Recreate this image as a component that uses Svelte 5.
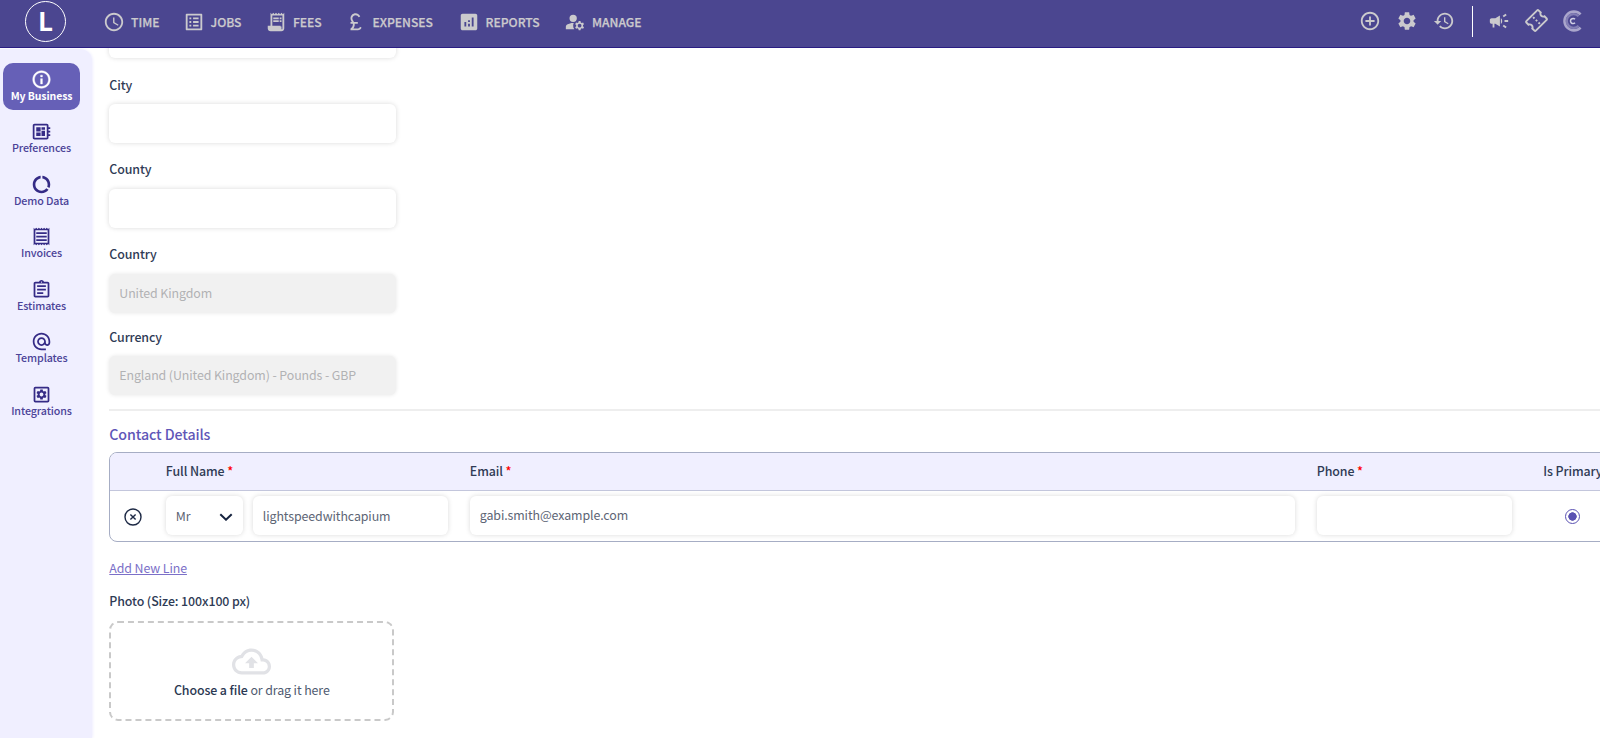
<script lang="ts">
	const gear =
		'M19.14 12.94c.04-.3.06-.61.06-.94 0-.32-.02-.64-.07-.94l2.03-1.58c.18-.14.23-.41.12-.61l-1.92-3.32c-.12-.22-.37-.29-.59-.22l-2.39.96c-.5-.38-1.03-.7-1.62-.94l-.36-2.54c-.04-.24-.24-.41-.48-.41h-3.84c-.24 0-.43.17-.47.41l-.36 2.54c-.59.24-1.13.57-1.62.94l-2.39-.96c-.22-.08-.47 0-.59.22L2.74 8.87c-.12.21-.08.47.12.61l2.03 1.58c-.05.3-.09.63-.09.94s.02.64.07.94l-2.03 1.58c-.18.14-.23.41-.12.61l1.92 3.32c.12.22.37.29.59.22l2.39-.96c.5.38 1.03.7 1.62.94l.36 2.54c.05.24.24.41.48.41h3.84c.24 0 .44-.17.47-.41l.36-2.54c.59-.24 1.13-.56 1.62-.94l2.39.96c.22.08.47 0 .59-.22l1.92-3.32c.12-.22.07-.47-.12-.61l-2.01-1.58zM12 15.6c-1.98 0-3.6-1.62-3.6-3.6s1.62-3.6 3.6-3.6 3.6 1.62 3.6 3.6-1.62 3.6-3.6 3.6z';

	const nav = [
		{ label: 'TIME', icon: 'M11.99 2C6.47 2 2 6.48 2 12s4.47 10 9.99 10C17.52 22 22 17.52 22 12S17.52 2 11.99 2zM12 20c-4.42 0-8-3.58-8-8s3.58-8 8-8 8 3.58 8 8-3.58 8-8 8zM12.5 7H11v6l5.25 3.15.75-1.23-4.5-2.67z' },
		{ label: 'JOBS', icon: 'M19 5v14H5V5h14m1.1-2H3.9c-.5 0-.9.4-.9.9v16.2c0 .4.4.9.9.9h16.2c.4 0 .9-.5.9-.9V3.9c0-.5-.5-.9-.9-.9zM11 7h6v2h-6V7zm0 4h6v2h-6v-2zm0 4h6v2h-6zM7 7h2v2H7zm0 4h2v2H7zm0 4h2v2H7z' },
		{ label: 'FEES', icon: 'M19.5 3.5L18 2l-1.5 1.5L15 2l-1.5 1.5L12 2l-1.5 1.5L9 2 7.5 3.5 6 2v14H3v3c0 1.66 1.34 3 3 3h12c1.66 0 3-1.34 3-3V2l-1.5 1.5zM19 19c0 .55-.45 1-1 1s-1-.45-1-1v-3H8V5h11v14zM9 7h6v2H9zM16 7h2v2h-2zM9 10h6v2H9zM16 10h2v2h-2z' },
		{ label: 'EXPENSES', icon: 'M14 21c1.93 0 3.62-1.17 4-3l-1.75-.88C16 18.21 15.33 19 14 19H9.1c.83-1 1.5-2.34 1.5-4 0-.35-.03-.69-.08-1H14v-2H9.82C9 10.42 8 9.6 8 8c0-1.93 1.57-3.5 3.5-3.5 1.5 0 2.79.95 3.28 2.28L16.63 6c-.8-2.05-2.79-3.5-5.13-3.5C8.46 2.5 6 4.96 6 8c0 1.78.79 2.9 1.49 4H6v2h2.47c.08.31.13.64.13 1 0 2.7-2.6 4-2.6 4v2h8z' },
		{ label: 'REPORTS', icon: 'M19 3H5c-1.1 0-2 .9-2 2v14c0 1.1.9 2 2 2h14c1.1 0 2-.9 2-2V5c0-1.1-.9-2-2-2zM9 17H7v-5h2v5zm4 0h-2v-3h2v3zm0-5h-2v-2h2v2zm4 5h-2V7h2v10z' },
		{ label: 'MANAGE', icon: 'M10 4a4 4 0 1 0 0 8 4 4 0 0 0 0-8zM10.67 13.02C10.45 13.01 10.23 13 10 13c-2.42 0-4.68.67-6.61 1.82C2.51 15.34 2 16.32 2 17.35V20h9.26C10.47 18.87 10 17.49 10 16c0-1.07.25-2.07.67-2.98zM20.75 16c0-.22-.03-.42-.06-.63l1.14-1.01-1-1.73-1.45.49c-.32-.27-.68-.48-1.08-.63L18 11h-2l-.3 1.49c-.4.15-.76.36-1.08.63l-1.45-.49-1 1.73 1.14 1.01c-.03.21-.06.41-.06.63s.03.42.06.63l-1.14 1.01 1 1.73 1.45-.49c.32.27.68.48 1.08.63L16 21h2l.3-1.49c.4-.15.76-.36 1.08-.63l1.45.49 1-1.73-1.14-1.01c.03-.21.06-.41.06-.63zM17 18c-1.1 0-2-.9-2-2s.9-2 2-2 2 .9 2 2-.9 2-2 2z' }
	];

	const side = [
		{ label: 'My Business', icon: 'M11 7h2v2h-2zm0 4h2v6h-2zm1-9C6.48 2 2 6.48 2 12s4.48 10 10 10 10-4.48 10-10S17.52 2 12 2zm0 18c-4.41 0-8-3.59-8-8s3.59-8 8-8 8 3.59 8 8-3.59 8-8 8z' },
		{ label: 'Preferences', icon: 'M22 9V7h-2V5c0-1.1-.9-2-2-2H4c-1.1 0-2 .9-2 2v14c0 1.1.9 2 2 2h14c1.1 0 2-.9 2-2v-2h2v-2h-2v-2h2v-2h-2V9h2zm-4 10H4V5h14v14zM6 13h5v4H6zm6-6h4v3h-4zM6 7h5v5H6zm6 4h4v6h-4z' },
		{ label: 'Demo Data', icon: 'M13 2.05v3.03c3.39.49 6 3.39 6 6.92 0 .9-.18 1.75-.48 2.54l2.6 1.53c.56-1.24.88-2.62.88-4.07 0-5.18-3.95-9.45-9-9.95zM12 19c-3.87 0-7-3.13-7-7 0-3.53 2.61-6.43 6-6.92V2.05c-5.06.5-9 4.76-9 9.95 0 5.52 4.47 10 9.99 10 3.31 0 6.24-1.61 8.06-4.09l-2.6-1.53C16.17 17.98 14.21 19 12 19z' },
		{ label: 'Invoices', icon: 'M19.5 3.5L18 2l-1.5 1.5L15 2l-1.5 1.5L12 2l-1.5 1.5L9 2 7.5 3.5 6 2 4.5 3.5 3 2v20l1.5-1.5L6 22l1.5-1.5L9 22l1.5-1.5L12 22l1.5-1.5L15 22l1.5-1.5L18 22l1.5-1.5L21 22V2l-1.5 1.5zM19 19.09H5V4.91h14v14.18zM6 15h12v2H6zm0-4h12v2H6zm0-4h12v2H6z' },
		{ label: 'Estimates', icon: 'M7 15h7v2H7zm0-4h10v2H7zm0-4h10v2H7zm12-4h-4.18C14.4 1.84 13.3 1 12 1c-1.3 0-2.4.84-2.82 2H5c-1.1 0-2 .9-2 2v14c0 1.1.9 2 2 2h14c1.1 0 2-.9 2-2V5c0-1.1-.9-2-2-2zm-7-.25c.41 0 .75.34.75.75s-.34.75-.75.75-.75-.34-.75-.75.34-.75.75-.75zM19 19H5V5h14v14z' },
		{ label: 'Templates', icon: 'M12 2C6.48 2 2 6.48 2 12s4.48 10 10 10h5v-2h-5c-4.34 0-8-3.66-8-8s3.66-8 8-8 8 3.66 8 8v1.43c0 .79-.71 1.57-1.5 1.57s-1.5-.78-1.5-1.57V12c0-2.76-2.24-5-5-5s-5 2.24-5 5 2.24 5 5 5c1.38 0 2.64-.56 3.54-1.47.65.89 1.77 1.47 2.96 1.47 1.97 0 3.5-1.6 3.5-3.57V12c0-5.52-4.48-10-10-10zm0 13c-1.66 0-3-1.34-3-3s1.34-3 3-3 3 1.34 3 3-1.34 3-3 3z' },
		{ label: 'Integrations', icon: '' }
	];

	let active = $state('My Business');
	let city = $state('');
	let county = $state('');
	let fullName = $state('lightspeedwithcapium');
	let email = $state('gabi.smith@example.com');
	let phone = $state('');
</script>

<div class="app">
	<header>
		<div class="logo">L</div>
		<nav>
			{#each nav as item}
				<a href="#{item.label}">
					<svg viewBox="0 0 24 24">
						<path fill-rule="evenodd" d={item.icon} />
						{#if item.label === 'FEES'}
							<path d="M4 17h14v4H6a2 2 0 0 1-2-2z" />
						{/if}
					</svg>
					<span>{item.label}</span>
				</a>
			{/each}
		</nav>
		<div class="tools">
			<svg viewBox="0 0 24 24"><path d="M13 7h-2v4H7v2h4v4h2v-4h4v-2h-4V7zm-1-5C6.48 2 2 6.48 2 12s4.48 10 10 10 10-4.48 10-10S17.52 2 12 2zm0 18c-4.41 0-8-3.59-8-8s3.59-8 8-8 8 3.59 8 8-3.59 8-8 8z" /></svg>
			<svg viewBox="0 0 24 24"><path d={gear} /></svg>
			<svg viewBox="0 0 24 24"><path d="M13 3c-4.97 0-9 4.03-9 9H1l3.89 3.89.07.14L9 12H6c0-3.87 3.13-7 7-7s7 3.13 7 7-3.13 7-7 7c-1.93 0-3.68-.79-4.94-2.06l-1.42 1.42C8.27 19.99 10.51 21 13 21c4.97 0 9-4.03 9-9s-4.03-9-9-9zm-1 5v5l4.28 2.54.72-1.21-3.5-2.08V8H12z" /></svg>
			<i class="divider"></i>
			<svg viewBox="0 0 24 24"><path d="M18 11v2h4v-2h-4zm-2 6.61c.96.71 2.21 1.65 3.2 2.39.4-.53.8-1.07 1.2-1.6-.99-.74-2.24-1.68-3.2-2.4-.4.54-.8 1.08-1.2 1.61zM20.4 5.6c-.4-.53-.8-1.07-1.2-1.6-.99.74-2.24 1.68-3.2 2.4.4.53.8 1.07 1.2 1.6.96-.72 2.21-1.65 3.2-2.4zM4 9c-1.1 0-2 .9-2 2v2c0 1.1.9 2 2 2h1v4h2v-4h1l5 3V6L8 9H4zm11.5 3c0-1.33-.58-2.53-1.5-3.35v6.69c.92-.81 1.5-2.01 1.5-3.34z" /></svg>
			<svg class="ticket" viewBox="0 0 24 24"><path transform="rotate(-45 12 12)" d="M22 10V6c0-1.11-.9-2-2-2H4c-1.1 0-1.99.89-1.99 2v4c1.1 0 1.99.9 1.99 2s-.89 2-2 2v4c0 1.1.9 2 2 2h16c1.1 0 2-.9 2-2v-4c-1.1 0-2-.9-2-2s.9-2 2-2zm-2-1.46c-1.19.69-2 1.99-2 3.46s.81 2.77 2 3.46V18H4v-2.54c1.19-.69 2-1.99 2-3.46 0-1.48-.8-2.77-1.99-3.46L4 6h16v2.54zM11 15h2v2h-2zm0-4h2v2h-2zm0-4h2v2h-2z" /></svg>
			<svg class="brand" viewBox="0 0 22 22">
				<path d="M18.6 4.4A9.4 9.4 0 1 0 18.6 17.6" stroke-width="2.6" />
				<path class="inner" d="M16.6 6.2A6.9 6.9 0 1 0 16.6 15.8" stroke-width="2.4" />
				<path class="letter" d="M13 9.2A2.6 2.6 0 1 0 13 12.8" stroke-width="1.5" />
			</svg>
		</div>
	</header>

	<div class="body">
		<aside>
			{#each side as item}
				<button class:active={active === item.label} onclick={() => (active = item.label)}>
					<svg viewBox="0 0 24 24">
						{#if item.icon}
							<path d={item.icon} />
						{:else}
							<path fill-rule="evenodd" d="M5 3h14a2 2 0 0 1 2 2v14a2 2 0 0 1-2 2H5a2 2 0 0 1-2-2V5a2 2 0 0 1 2-2zm0 2v14h14V5z" />
							<path transform="translate(4.8 4.8) scale(.6)" d={gear} />
						{/if}
					</svg>
					<span>{item.label}</span>
				</button>
			{/each}
		</aside>

		<main>
			<input class="box clipped" aria-label="Address" />
			<div class="field city">
				<label for="city">City</label>
				<input id="city" class="box" bind:value={city} />
			</div>
			<div class="field county">
				<label for="county">County</label>
				<input id="county" class="box" bind:value={county} />
			</div>
			<div class="field country">
				<label for="country">Country</label>
				<input id="country" class="box" value="United Kingdom" disabled />
			</div>
			<div class="field currency">
				<label for="currency">Currency</label>
				<input id="currency" class="box" value="England (United Kingdom) - Pounds - GBP" disabled />
			</div>

			<hr />

			<h2>Contact Details</h2>
			<div class="table">
				<div class="row head">
					<span></span>
					<span>Full Name <b>*</b></span>
					<span>Email <b>*</b></span>
					<span>Phone <b>*</b></span>
					<span class="primary">Is Primary</span>
				</div>
				<div class="row">
					<svg class="remove" viewBox="0 0 18 18"><circle cx="9" cy="9" r="8" /><path d="M6.4 6.4l5.2 5.2M11.6 6.4l-5.2 5.2" /></svg>
					<div class="name">
						<div class="box select">
							<span>Mr</span>
							<svg viewBox="0 0 14 8"><path d="M1.3 1.2L7 6.7l5.7-5.5" /></svg>
						</div>
						<input class="box" aria-label="Full Name" bind:value={fullName} />
					</div>
					<input class="box email" aria-label="Email" bind:value={email} />
					<input class="box phone" aria-label="Phone" bind:value={phone} />
					<i class="radio"></i>
				</div>
			</div>

			<a class="add" href="#add">Add New Line</a>

			<div class="photo">Photo (Size: 100x100 px)</div>
			<div class="drop">
				<svg viewBox="0 0 24 24"><path d="M19.35 10.04C18.67 6.59 15.64 4 12 4 9.11 4 6.6 5.64 5.35 8.04 2.34 8.36 0 10.91 0 14c0 3.31 2.69 6 6 6h13c2.76 0 5-2.24 5-5 0-2.64-2.05-4.78-4.65-4.96zM19 18H6c-2.21 0-4-1.79-4-4 0-2.05 1.53-3.76 3.56-3.97l1.07-.11.5-.95C8.08 7.14 9.94 6 12 6c2.62 0 4.88 1.86 5.39 4.43l.3 1.5 1.53.11c1.56.1 2.78 1.41 2.78 2.96 0 1.65-1.35 3-3 3zM8 13h2.55v3h2.9v-3H16l-4-4z" /></svg>
				<p><strong>Choose a file</strong> or drag it here</p>
			</div>
		</main>
	</div>
</div>

<style>
	:global(body) {
		margin: 0;
		overflow: hidden;
	}

	.app {
		display: flex;
		flex-direction: column;
		height: 738px;
		overflow: hidden;
		background: #fff;
		color: #2f3b55;
		font: 12.4px/20px "Noto Sans CJK SC", sans-serif;
		letter-spacing: -0.1px;
	}

	.app * {
		box-sizing: border-box;
	}

	input,
	button {
		font: inherit;
		color: inherit;
		letter-spacing: inherit;
	}

	header {
		display: flex;
		flex: none;
		height: 48px;
		background: #4b4690;
		border-bottom: 1px solid #2a1d83;
		color: #cbcacd;
		z-index: 1;
	}

	.logo {
		width: 41px;
		height: 41px;
		margin: 1px 37px 0 25px;
		border: 1px solid #fff;
		border-radius: 50%;
		color: #fff;
		font-size: 26px;
		font-weight: 700;
		line-height: 36px;
		text-align: center;
	}

	nav {
		display: grid;
		grid-template-columns: 79.5px 82.5px 79.5px 113px 106.5px 90px;
		height: 44px;
	}

	nav a {
		display: flex;
		align-items: center;
		gap: 6px;
		color: inherit;
		font-size: 12.1px;
		font-weight: 500;
		letter-spacing: 0;
		text-decoration: none;
		-webkit-text-stroke: 0.25px currentColor;
	}

	nav svg,
	.tools svg {
		flex: none;
		width: 22px;
		height: 22px;
		fill: currentColor;
	}

	.tools {
		display: flex;
		align-items: center;
		gap: 15px;
		height: 41px;
		margin-left: auto;
		margin-right: 16px;
	}

	.divider {
		width: 1px;
		height: 31px;
		margin: 2px 0.5px 0 1.5px;
		background: #fff;
	}

	.tools .ticket {
		width: 23px;
		height: 23px;
		margin: 0 -0.5px;
	}

	.tools .brand {
		fill: none;
		stroke: #aaa6cc;
	}

	.tools .brand .inner {
		stroke: #827eb5;
	}

	.tools .brand .letter {
		stroke: #d0cfe4;
	}

	.body {
		display: flex;
		flex: 1;
		min-height: 0;
	}

	aside {
		display: flex;
		flex: none;
		flex-direction: column;
		gap: 5.5px;
		width: 92px;
		margin-top: 1px;
		padding: 14px 0 0 3px;
		background: #f0efff;
		border-top-right-radius: 12px;
		box-shadow: 1px 0 3px #f0efff;
	}

	aside button {
		display: flex;
		flex-direction: column;
		align-items: center;
		width: 77px;
		height: 47px;
		padding: 5.5px 0 0;
		border: 0;
		border-radius: 10px;
		background: none;
		color: #4b4398;
		font-size: 10.7px;
		line-height: 12px;
		font-weight: 500;
		white-space: nowrap;
	}

	aside .active {
		background: #6660b7;
		color: #fff;
		font-size: 10.5px;
		font-weight: 700;
	}

	aside svg {
		flex: none;
		width: 21px;
		height: 21px;
		fill: #352b86;
	}

	aside .active svg {
		fill: #fff;
		stroke: #fff;
		stroke-width: 0.5;
	}

	main {
		flex: none;
		width: 1600px;
		padding-left: 17.3px;
	}

	.box {
		display: block;
		width: 287px;
		height: 39px;
		padding: 0 10px;
		border: 0;
		border-radius: 6px;
		background: #fff;
		box-shadow: 0 0 5px rgba(0, 0, 0, 0.15);
		color: #5d6575;
		outline: 0;
	}

	.box:disabled {
		padding-bottom: 1px;
		background: #f1f1f1;
		box-shadow: 0 0 4px rgba(0, 0, 0, 0.1);
		color: #b1b2b4;
	}

	.clipped {
		margin-top: -29px;
	}

	label {
		display: block;
		font-weight: 500;
	}

	.city {
		margin-top: 17px;
	}

	.city label,
	.currency label {
		margin-bottom: 9px;
	}

	.county {
		margin-top: 16px;
	}

	.county label,
	.country label {
		margin-bottom: 10px;
	}

	.country {
		margin-top: 15.5px;
	}

	.currency {
		margin-top: 14px;
	}

	hr {
		height: 2px;
		margin: 14.5px 0 0;
		border: 0;
		background: #eee;
	}

	h2 {
		margin: 12px 0 7px;
		color: #5f56b8;
		font-size: 14.2px;
		line-height: 22px;
		font-weight: 500;
	}

	.table {
		width: 1530px;
		overflow: hidden;
		border: 1px solid #a6adc4;
		border-radius: 8px;
	}

	.row {
		display: grid;
		grid-template-columns: 55.5px 304px 847px 226.5px 94px;
		align-items: center;
		height: 50px;
	}

	.head {
		height: 38px;
		padding-bottom: 2px;
		border-bottom: 1px solid #c3c6dc;
		background: #f0efff;
		font-weight: 500;
	}

	.head b {
		color: #f00;
		font-weight: 500;
	}

	.remove {
		width: 18px;
		margin: 1px 0 0 13.5px;
		fill: none;
		stroke: #1d2945;
		stroke-width: 1.4;
	}

	.name {
		display: flex;
		gap: 10px;
		margin-bottom: 1px;
	}

	.name input {
		width: 195px;
	}

	.name .select {
		display: flex;
		align-items: center;
		justify-content: space-between;
		width: 77px;
	}

	.select svg {
		width: 14px;
		margin-top: 2px;
		fill: none;
		stroke: #16233f;
		stroke-width: 2;
	}

	.email {
		width: 825px;
		margin-bottom: 2px;
	}

	.phone {
		width: 195px;
		margin-bottom: 2px;
	}

	.radio {
		width: 15px;
		height: 15px;
		margin-left: 21.5px;
		border: 1.5px solid #5a51b2;
		border-radius: 50%;
		background: radial-gradient(circle, #5a51b2 3.9px, #fff 4.5px);
	}

	.add {
		display: block;
		width: max-content;
		margin-top: 16px;
		color: #7b70c8;
	}

	.photo {
		margin-top: 13px;
		font-weight: 500;
	}

	.drop {
		display: flex;
		flex-direction: column;
		align-items: center;
		width: 285px;
		height: 100px;
		margin-top: 10px;
		border: 2px dashed #c9c9c9;
		border-radius: 9px;
	}

	.drop svg {
		width: 39px;
		height: 39px;
		margin-top: 19px;
		fill: #e1e2e6;
	}

	.drop p {
		margin: -1px 0 0;
		color: #4f5a70;
	}

	.drop strong {
		color: #2b3852;
		font-weight: 500;
	}
</style>
